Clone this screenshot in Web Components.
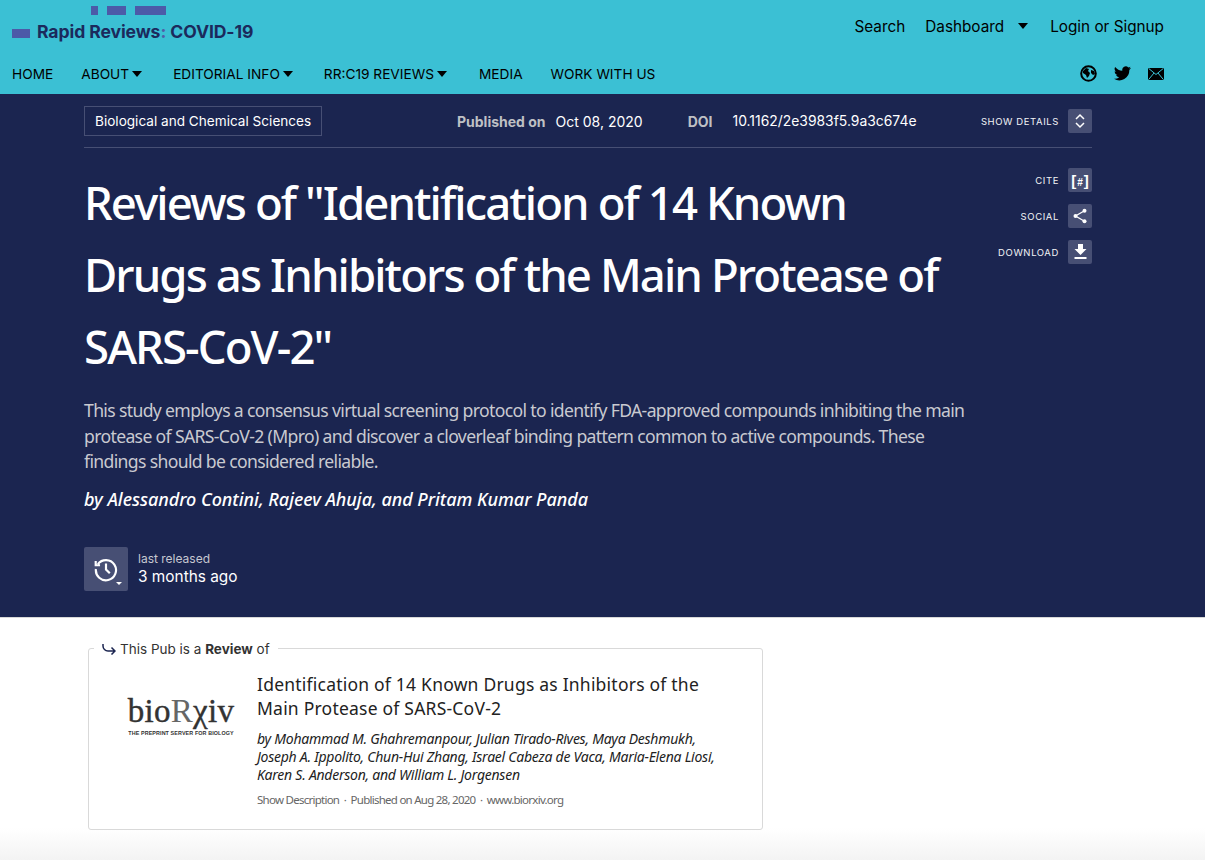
<!DOCTYPE html>
<html><head><meta charset="utf-8"><style>
html,body{margin:0;padding:0;background:#fff;font-family:Inter,"Liberation Sans",sans-serif}
</style></head><body>
<rr-header></rr-header>
<pub-hero></pub-hero>
<pub-connection></pub-connection>
<script>
function def(name,html){customElements.define(name,class extends HTMLElement{constructor(){super();this.attachShadow({mode:'open'}).innerHTML=html}})}
const caret='<svg width="10" height="6" viewBox="0 0 10 6"><path d="M0 0h10L5 6z" fill="#000"/></svg>';
def('nav-item',`<style>:host{display:inline-flex;align-items:center;gap:3px;font-size:13.7px;color:#000;white-space:nowrap}</style><slot></slot>`);
def('rr-header',`<style>
:host{display:block;height:94px;background:#3bc0d4;color:#000;box-sizing:border-box}
.top{height:54px;display:flex;justify-content:space-between;padding:0 41px 0 12px;position:relative}
.logo{position:relative;width:260px;height:54px}
.logo svg{position:absolute;left:-12px;top:0}
.brand{position:absolute;left:25px;top:21px;font-size:17.6px;font-weight:700;color:#1b2a5c;white-space:nowrap;letter-spacing:-.1px}
.brand i{font-style:normal;color:#4f5fa8}
.right{display:flex;gap:20px;align-items:center;font-size:15.3px;height:52px}
.right span{display:flex;align-items:center;gap:14px}
.bot{height:40px;display:flex;align-items:flex-start;padding:0 41px 0 12px;justify-content:space-between}
.links{display:flex;padding-top:12px}
.icons{display:flex;gap:17px;padding-top:11px;align-items:center}
</style>
<div class="top"><div class="logo"><svg width="170" height="40"><g fill="#4c5aa8"><rect x="91" y="6" width="7" height="9"/><rect x="107" y="6" width="19" height="9"/><rect x="135" y="6" width="31" height="9"/><rect x="12" y="29" width="18" height="9"/></g></svg><div class="brand">Rapid Reviews<i>:</i> COVID-19</div></div>
<div class="right"><span>Search</span><span>Dashboard ${caret}</span><span style="margin-left:2px">Login or Signup</span></div></div>
<div class="bot"><div class="links">
<nav-item style="margin-right:28px">HOME</nav-item>
<nav-item style="margin-right:31px">ABOUT ${caret}</nav-item>
<nav-item style="margin-right:31px">EDITORIAL INFO ${caret}</nav-item>
<nav-item style="margin-right:32px">RR:C19 REVIEWS ${caret}</nav-item>
<nav-item style="margin-right:28px">MEDIA</nav-item>
<nav-item>WORK WITH US</nav-item></div>
<div class="icons">
<svg width="17" height="17" viewBox="0 0 17 17"><circle cx="8.5" cy="8.5" r="7.3" fill="none" stroke="#000" stroke-width="2"/><path d="M3 6l3-3 3 1-1 2 2 2-1 3-2 2-1-3-3-2zM11 5l3 1 1 3-2 1-2-2z" fill="#000"/></svg>
<svg width="17" height="15" viewBox="0 0 24 20"><path d="M24 2.4a10 10 0 0 1-2.8.8A5 5 0 0 0 23.3.5a10 10 0 0 1-3.1 1.2 4.9 4.9 0 0 0-8.4 4.5A14 14 0 0 1 1.7.9a4.9 4.9 0 0 0 1.5 6.6 4.900 4.900 0 0 1-2.200-.6 4.900 4.900 0 0 0 3.900 4.900 5 5 0 0 1-2.200.1 4.900 4.900 0 0 0 4.600 3.400A9.900 9.900 0 0 1 0 17.400 14 14 0 0 0 21.600 5a10 10 0 0 0 2.400-2.600z" fill="#000"/></svg>
<svg width="16" height="12" viewBox="0 0 16 12"><path d="M0 0h16v12H0z" fill="#000"/><path d="M.5.300L8 6.500 15.500.300M.5 11.700L6 5M15.500 11.700L10 5" stroke="#3bc0d4" stroke-width="1" fill="none"/></svg>
</div></div>`);
def('action-row',`<style>:host{display:flex;align-items:center;justify-content:flex-end;gap:9px;height:24px;font-size:9.5px;letter-spacing:.6px;color:#f2f3f6;white-space:nowrap}
b{width:24px;height:24px;background:#474f74;border-radius:2px;display:flex;align-items:center;justify-content:center;font-weight:700;font-size:12px;letter-spacing:0;color:#fff}</style><slot></slot><b><slot name="i"></slot></b>`);
def('pub-hero',`<style>
:host{display:block;background:#1b2550;height:524px;box-sizing:border-box;padding:0 113px 0 84px;color:#fff;border-bottom:1px solid #d8d8d8}
.meta{display:flex;align-items:center;height:54px;border-bottom:1px solid #474f74;font-size:14px;white-space:nowrap;padding-top:1px;box-sizing:border-box}
.tag{border:1px solid #474f74;padding:0 10px;line-height:28px;color:#fff;font-size:13.6px;height:28px;width:216px}
.lab{font-weight:700;color:#bfc0c4}
.wrap{display:grid;grid-template-columns:888px 120px}
h1{margin:18px 0 0;font:500 45.5px/72px "Noto Sans",sans-serif;letter-spacing:-1.9px;color:#fff;width:870px}
p{margin:16px 0 0;font:400 17.6px/25.5px "Noto Sans",sans-serif;letter-spacing:-.65px;color:#c9cad0;width:890px}
.by{margin-top:10px;font:italic 500 18px/28px "Noto Sans",sans-serif;letter-spacing:-.03px;color:#fff}
.rel{display:flex;gap:10px;margin-top:34px;align-items:center}
.hist{width:44px;height:44px;background:#474f74;border-radius:2px;display:flex;align-items:center;justify-content:center;position:relative}
.hist i{position:absolute;right:6px;bottom:6px;width:0;height:0;border:3px solid transparent;border-top:3px solid #fff;border-bottom:0}
.sm{font-size:12px;line-height:15px;color:#c6c8d0}.lg{font-size:15.4px;line-height:20px;margin-top:1px;color:#fff}
.acts{display:flex;flex-direction:column;gap:12px;padding-top:20px}
small{font-size:10px;padding:0 1px}
</style>
<div class="meta"><span class="tag">Biological and Chemical Sciences</span>
<span class="lab" style="margin-left:135px">Published on</span><span style="margin-left:10px">Oct 08, 2020</span>
<span class="lab" style="margin-left:45px">DOI</span><span style="margin-left:20px;font-size:13.9px">10.1162/2e3983f5.9a3c674e</span>
<action-row style="margin-left:auto"><span>SHOW DETAILS</span><svg slot="i" width="12" height="16" viewBox="0 0 12 16" fill="none" stroke="#fff" stroke-width="1.500"><path d="M2 6l4-4 4 4M2 10l4 4 4-4"/></svg></action-row></div>
<div class="wrap"><div>
<h1>Reviews of "Identification of 14 Known Drugs as Inhibitors of the Main Protease of SARS-CoV-2"</h1>
<p>This study employs a consensus virtual screening protocol to identify FDA-approved compounds inhibiting the main protease of SARS-CoV-2 (Mpro) and discover a cloverleaf binding pattern common to active compounds. These findings should be considered reliable.</p>
<div class="by">by Alessandro Contini, Rajeev Ahuja, and Pritam Kumar Panda</div>
<div class="rel"><div class="hist"><svg width="26" height="26" viewBox="0 0 24 24" fill="none" stroke="#fff" stroke-width="2"><path d="M4.500 7.500A9.300 9.300 0 1 1 2.700 12M2.500 4.500v4h4"/><path d="M12 7v5.500l3.500 3.500"/></svg><i></i></div><div><div class="sm">last released</div><div class="lg">3 months ago</div></div></div>
</div>
<div class="acts">
<action-row><span>CITE</span><span slot="i" style="font-family:'Liberation Sans',sans-serif;font-size:15px">[<small>#</small>]</span></action-row>
<action-row><span>SOCIAL</span><svg slot="i" width="14" height="16" viewBox="0 0 14 16" fill="#fff" stroke="#fff"><circle cx="2.500" cy="8" r="2" stroke="none"/><circle cx="11.500" cy="2.800" r="2" stroke="none"/><circle cx="11.500" cy="13.200" r="2" stroke="none"/><path d="M11.500 2.800L2.500 8l9 5.200" fill="none" stroke-width="1.300"/></svg></action-row>
<action-row><span>DOWNLOAD</span><svg slot="i" width="13" height="16" viewBox="0 0 13 16" fill="#fff"><path d="M4 0h5v5h3.500L6.500 11 .5 5H4zM.5 13h12v2H.5z"/></svg></action-row>
</div></div>`);
def('pub-connection',`<style>
:host{display:block;height:243px;box-sizing:border-box;padding:30px 0 0 88px;background:linear-gradient(#fff 210px,#f3f3f3 243px);color:#222}
.card{position:relative;width:675px;height:182px;box-sizing:border-box;border:1px solid #d9d9d9;border-radius:3px;padding:23px 30px 0 168px;background:#fff}
.leg{position:absolute;left:5px;top:-8px;padding:0 8px;background:#fff;font-size:13.5px;line-height:16px;display:flex;align-items:center;gap:4px;white-space:nowrap;color:#333}
.logo{position:absolute;left:38px;top:46px;width:108px;text-align:center;white-space:nowrap}
.w{font:500 33px/32px "Liberation Serif",serif;color:#333;letter-spacing:.3px;-webkit-text-stroke:.4px #333}
.w em{font-style:normal;color:#666;-webkit-text-stroke:0}
.s{font:700 5.4px/8px "Liberation Sans",sans-serif;color:#333;letter-spacing:.1px;margin-top:2px}
h2{margin:0;font:400 17.5px/24px "Noto Sans",sans-serif;letter-spacing:.22px;color:#222;white-space:nowrap}
.a{margin-top:10px;font:italic 400 14px/18px "Noto Sans",sans-serif;letter-spacing:-.25px;color:#222;white-space:nowrap}
.d{margin-top:8px;font:400 11.5px/16px "Noto Sans",sans-serif;letter-spacing:-.74px;color:#666;white-space:nowrap}
</style>
<div class="card"><div class="leg"><svg width="14" height="12" viewBox="0 0 14 12" fill="none" stroke="#1b2550" stroke-width="1.500"><path d="M1 1v2a5 5 0 0 0 5 5h7M9.500 4.500L13 8l-3.500 3.500"/></svg><span>This Pub is a <b>Review</b> of</span></div>
<div class="logo"><div class="w">bio<em>R</em>&chi;iv</div><div class="s">THE PREPRINT SERVER FOR BIOLOGY</div></div>
<h2>Identification of 14 Known Drugs as Inhibitors of the<br>Main Protease of SARS-CoV-2</h2>
<div class="a">by Mohammad M. Ghahremanpour, Julian Tirado-Rives, Maya Deshmukh,<br>Joseph A. Ippolito, Chun-Hui Zhang, Israel Cabeza de Vaca, Maria-Elena Liosi,<br>Karen S. Anderson, and William L. Jorgensen</div>
<div class="d">Show Description &nbsp;&middot;&nbsp; Published on Aug 28, 2020 &nbsp;&middot;&nbsp; www.biorxiv.org</div></div>`);
</script></body></html>
